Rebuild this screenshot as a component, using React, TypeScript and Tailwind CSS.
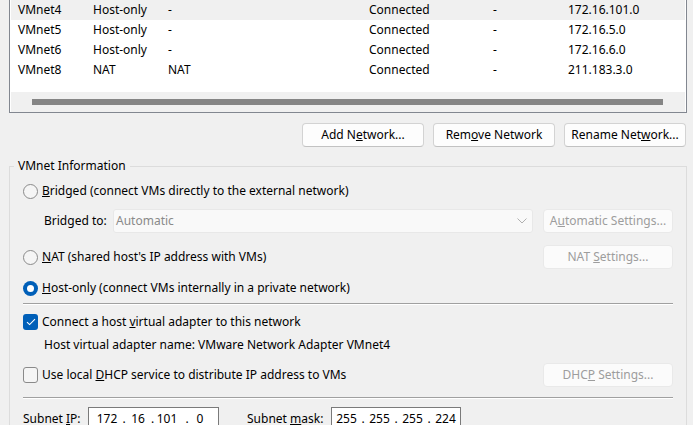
import React from 'react';

type Row = { name: string; type: string; ext: string; host: string; dhcp: string; subnet: string; selected?: boolean };

const rows: Row[] = [
  { name: 'VMnet4', type: 'Host-only', ext: '-', host: 'Connected', dhcp: '-', subnet: '172.16.101.0', selected: true },
  { name: 'VMnet5', type: 'Host-only', ext: '-', host: 'Connected', dhcp: '-', subnet: '172.16.5.0' },
  { name: 'VMnet6', type: 'Host-only', ext: '-', host: 'Connected', dhcp: '-', subnet: '172.16.6.0' },
  { name: 'VMnet8', type: 'NAT', ext: 'NAT', host: 'Connected', dhcp: '-', subnet: '211.183.3.0' },
];

const font = { fontFamily: '"Noto Sans", "Open Sans", sans-serif' };

function Btn({ children, disabled, className = '' }: { children: React.ReactNode; disabled?: boolean; className?: string }) {
  return (
    <div
      className={
        'flex items-center justify-center rounded-[4px] border h-[24px] ' +
        (disabled
          ? 'bg-[#fbfbfb] border-[#e9e9e9] text-[#9d9d9d] '
          : 'bg-[#fdfdfd] border-[#d3d3d3] border-b-[#c2c2c2] text-black ') +
        className
      }
    >
      <span>{children}</span>
    </div>
  );
}

function Radio({ checked }: { checked?: boolean }) {
  if (checked) {
    return (
      <div className="w-[15px] h-[15px] rounded-full bg-[#005fb8] flex items-center justify-center shrink-0">
        <div className="w-[7px] h-[7px] rounded-full bg-white" />
      </div>
    );
  }
  return <div className="w-[15px] h-[15px] rounded-full border border-[#8a8a8a] bg-[#f5f5f5] shrink-0" />;
}

function Check({ checked }: { checked?: boolean }) {
  if (checked) {
    return (
      <div className="w-[15px] h-[16px] rounded-[3px] bg-[#005fb8] flex items-center justify-center shrink-0">
        <svg width="10" height="8" viewBox="0 0 10 8" fill="none">
          <path d="M1 4.2 L3.6 6.6 L9 1.2" stroke="white" strokeWidth="1.1" />
        </svg>
      </div>
    );
  }
  return <div className="w-[15px] h-[16px] rounded-[3px] border border-[#8a8a8a] bg-[#f5f5f5] shrink-0" />;
}

function Sep() {
  return <div className="h-[2px] border-t border-[#a0a0a0] border-b border-b-white" />;
}

export default function App() {
  return (
    <div className="w-[693px] h-[425px] overflow-hidden bg-[#f0f0f0] text-[12px] leading-4 text-black" style={font}>
      {/* network list */}
      <div className="ml-[9px] w-[678px] border-x border-b border-[#828790] bg-white px-px">
        {rows.map((r) => (
          <div
            key={r.name}
            className={'grid grid-cols-[75px_75px_201px_124px_75px_1fr] pl-[7px] h-[20px] items-center ' + (r.selected ? 'bg-[#f0f0f0]' : '')}
          >
            <span>{r.name}</span>
            <span>{r.type}</span>
            <span>{r.ext}</span>
            <span>{r.host}</span>
            <span>{r.dhcp}</span>
            <span>{r.subnet}</span>
          </div>
        ))}
        <div className="h-[12px]" />
        <div className="h-[20px] bg-[#f0f0f0] flex items-center pl-[21px]">
          <div className="w-[631px] h-[6px] bg-[#858585]" />
        </div>
      </div>

      {/* buttons */}
      <div className="flex justify-end gap-[9px] mt-[10px] pr-[7px]">
        <Btn className="w-[122px]">Add N<u>e</u>twork...</Btn>
        <Btn className="w-[122px]">Rem<u>o</u>ve Network</Btn>
        <Btn className="w-[122px]">Rename Net<u>w</u>ork...</Btn>
      </div>

      {/* VMnet information */}
      <fieldset className="mt-[11px] ml-[9px] w-[677px] border border-[#dcdcdc] pl-[13px] pr-[13px] pb-4">
        <legend className="-ml-[9px] px-[4px] h-[16px]">VMnet Information</legend>

        <div className="mt-[7px] h-[20px] flex items-center gap-[4px]">
          <Radio />
          <span>
            <u>B</u>ridged (connect VMs directly to the external network)
          </span>
        </div>

        <div className="mt-[8px] h-[24px] flex items-center">
          <span className="pl-[21px] w-[90px]">
            Brid<u>g</u>ed to:
          </span>
          <div className="w-[420px] h-[24px] rounded-[3px] border border-[#e8e8e8] bg-[#f9f9f9] flex items-center pl-[2px] pr-[5px] text-[#8a8a8a]">
            <span className="flex-1">Automatic</span>
            <svg width="10" height="6" viewBox="0 0 10 6" fill="none">
              <path d="M0.5 0.5 L5 5 L9.5 0.5" stroke="#b0b0b0" strokeWidth="1" />
            </svg>
          </div>
          <Btn disabled className="ml-[10px] w-[130px]">
            A<u>u</u>tomatic Settings...
          </Btn>
        </div>

        <div className="mt-[12px] h-[24px] flex items-center gap-[4px]">
          <Radio />
          <span>
            <u>N</u>AT (shared host's IP address with VMs)
          </span>
          <Btn disabled className="ml-auto w-[130px]">
            NAT <u>S</u>ettings...
          </Btn>
        </div>

        <div className="mt-[9px] h-[20px] flex items-center gap-[4px]">
          <Radio checked />
          <span>
            <u>H</u>ost-only (connect VMs internally in a private network)
          </span>
        </div>

        <div className="mt-[5px]">
          <Sep />
        </div>

        <div className="mt-[7px] h-[20px] flex items-center gap-[4px]">
          <Check checked />
          <span>
            Connect a host <u>v</u>irtual adapter to this network
          </span>
        </div>

        <div className="mt-[5px] h-[16px] pl-[21px]">Host virtual adapter name: VMware Network Adapter VMnet4</div>

        <div className="mt-[10px] h-[24px] flex items-center gap-[4px]">
          <Check />
          <span>
            Use local <u>D</u>HCP service to distribute IP address to VMs
          </span>
          <Btn disabled className="ml-auto w-[130px]">
            DHC<u>P</u> Settings...
          </Btn>
        </div>

        <div className="mt-[10px]">
          <Sep />
        </div>

        <div className="mt-[8px] h-[24px] flex items-center">
          <span className="w-[65px]">
            Subnet <u>I</u>P:
          </span>
          <div className="w-[131px] h-[24px] border border-[#7a7a7a] bg-white flex items-center pl-[3px]">
            <span className="w-[30px] text-center">172</span>
            <span className="w-[4px] text-center">.</span>
            <span className="w-[24px] text-center">16</span>
            <span className="w-[5px] text-center">.</span>
            <span className="w-[24px] text-center">101</span>
            <span className="ml-[6px] w-[4px] text-center">.</span>
            <span className="w-[22px] text-center">0</span>
          </div>
          <span className="ml-[28px] w-[84px]">
            Subnet <u>m</u>ask:
          </span>
          <div className="w-[130px] h-[24px] border border-[#7a7a7a] bg-white flex items-center pl-[1px]">
            <span className="w-[27px] text-center">255</span>
            <span className="w-[6px] text-center">.</span>
            <span className="w-[27px] text-center">255</span>
            <span className="w-[6px] text-center">.</span>
            <span className="w-[27px] text-center">255</span>
            <span className="w-[6px] text-center">.</span>
            <span className="w-[27px] text-center">224</span>
          </div>
        </div>
      </fieldset>
    </div>
  );
}
